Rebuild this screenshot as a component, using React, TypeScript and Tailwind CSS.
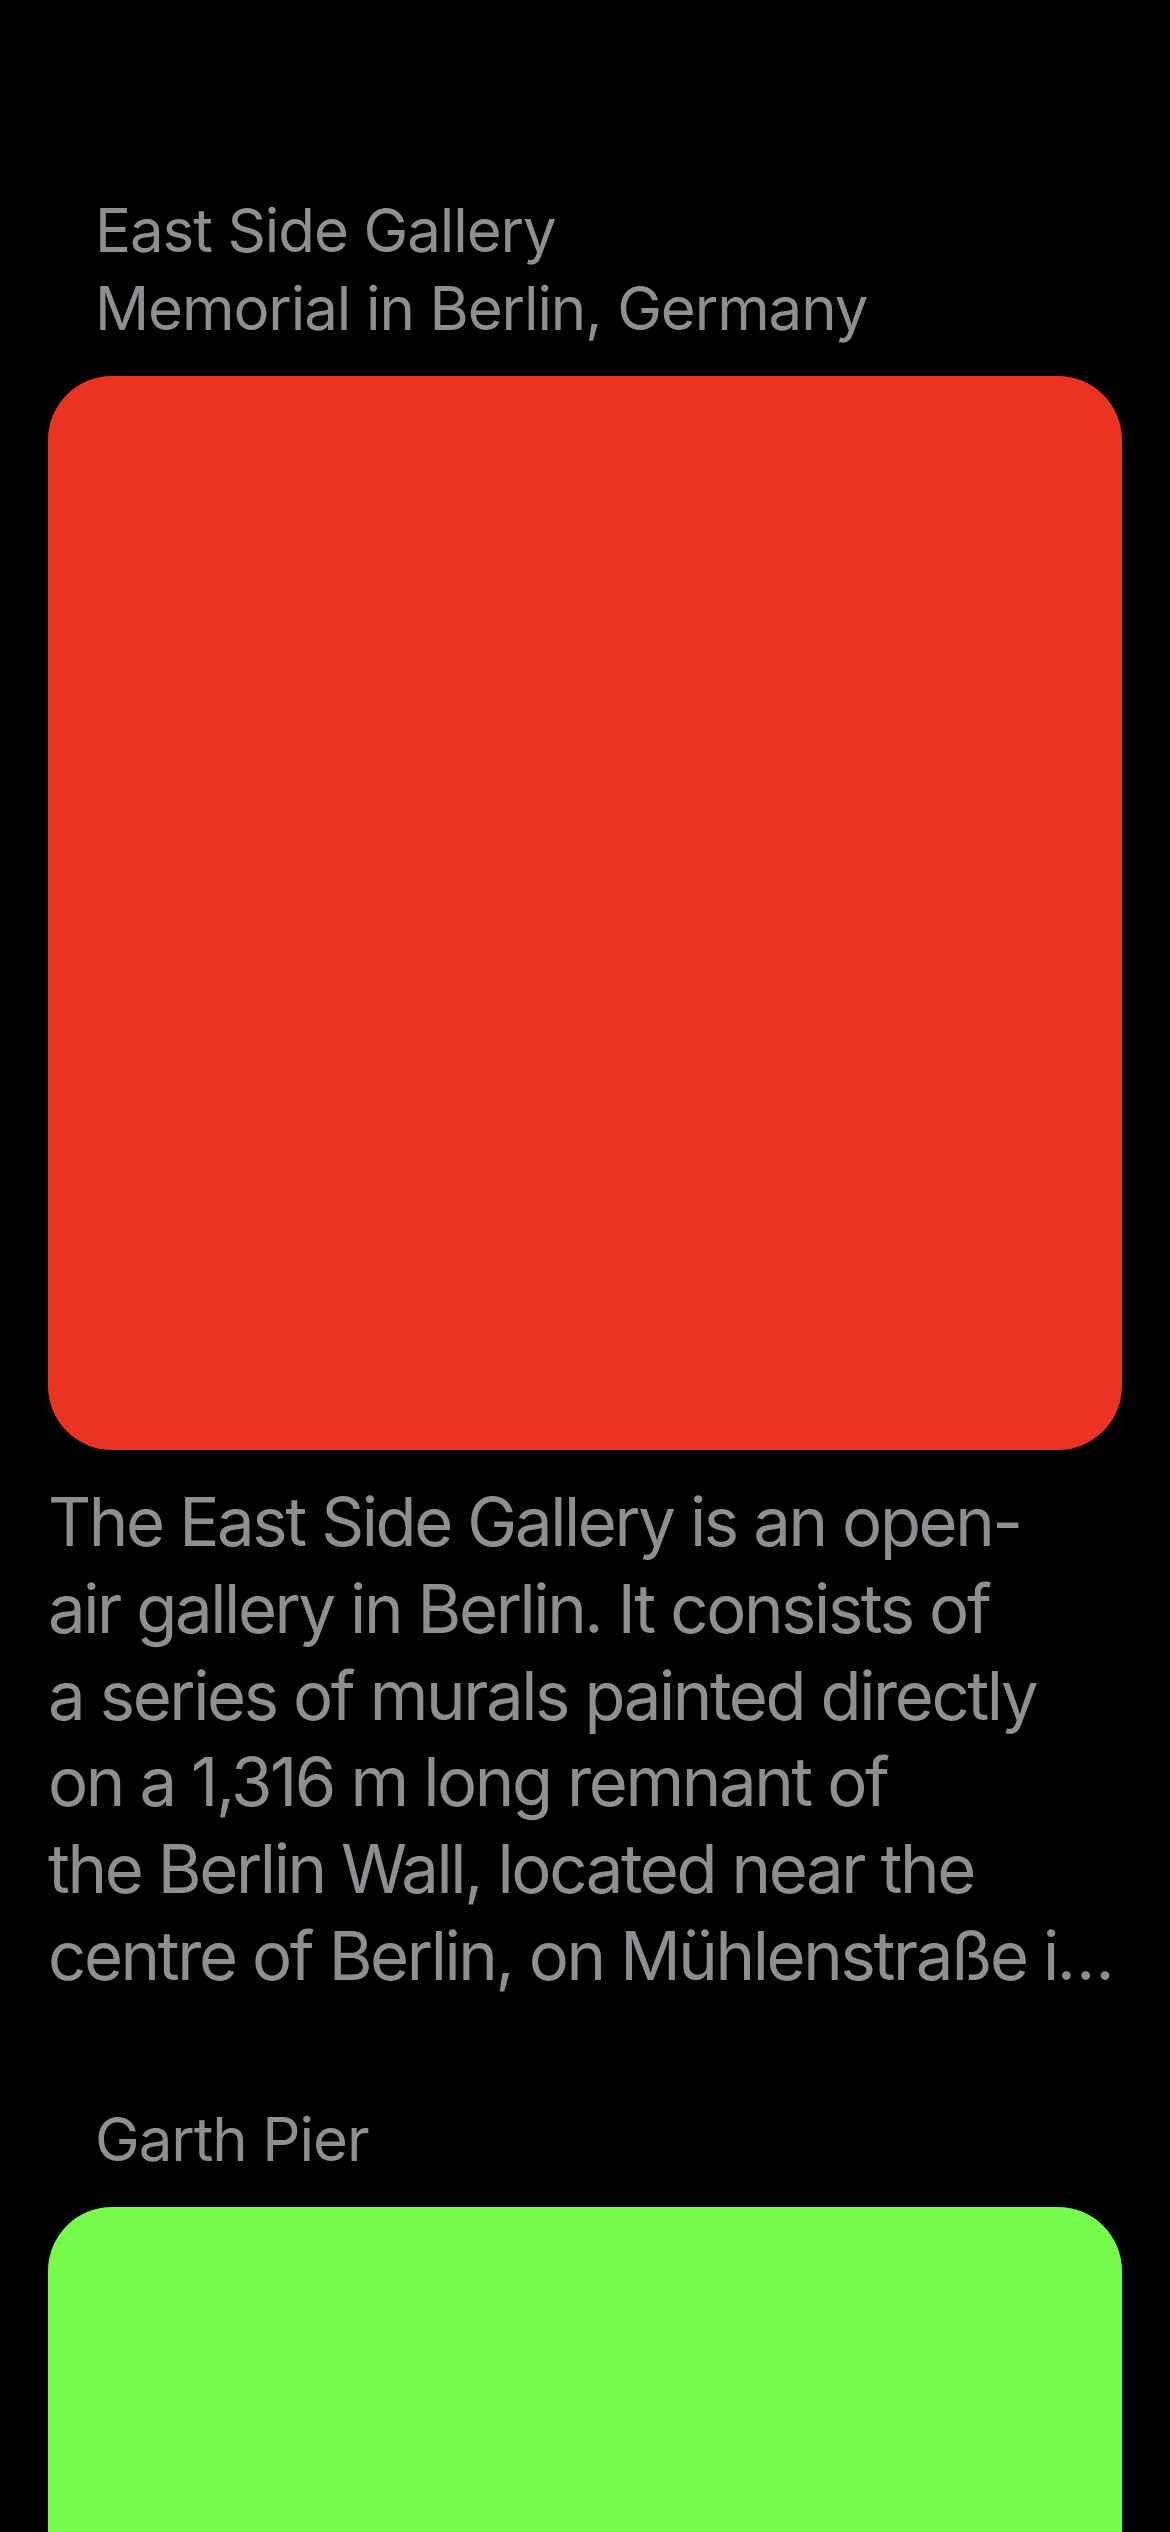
import React from 'react';

type Place = {
  title: string;
  subtitle?: string;
  color: string;
  lines?: string[];
};

const places: Place[] = [
  {
    title: 'East Side Gallery',
    subtitle: 'Memorial in Berlin, Germany',
    color: 'bg-[#ea3323]',
    lines: [
      'The East Side Gallery is an open-',
      'air gallery in Berlin. It consists of',
      'a series of murals painted directly',
      'on a 1,316 m long remnant of',
      'the Berlin Wall, located near the',
      'centre of Berlin, on Mühlenstraße i…',
    ],
  },
  {
    title: 'Garth Pier',
    color: 'bg-[#75fb4c]',
  },
];

const PlaceCard: React.FC<{ place: Place }> = ({ place }) => (
  <section className="flex flex-col">
    <div className="pl-[95px] text-[60px] leading-[78px] tracking-[-1.1px] text-[#8e8e93]">
      <div>{place.title}</div>
      {place.subtitle && <div>{place.subtitle}</div>}
    </div>
    <div className={`mx-[48px] mt-[29px] aspect-square rounded-[64px] ${place.color}`} />
    {place.lines && (
      <div className="mt-[29px] px-[48px] text-[67px] leading-[86.8px] tracking-[-2.4px] text-[#8e8e93]">
        {place.lines.map((line) => (
          <div key={line} className="whitespace-nowrap">
            {line}
          </div>
        ))}
      </div>
    )}
  </section>
);

export default function App() {
  return (
    <div
      className="h-[2532px] w-full overflow-hidden bg-black pt-[191px]"
      style={{ fontFamily: 'Inter, "Noto Sans", sans-serif' }}
    >
      <div className="flex flex-col gap-[100px]">
        {places.map((p) => (
          <PlaceCard key={p.title} place={p} />
        ))}
      </div>
    </div>
  );
}
